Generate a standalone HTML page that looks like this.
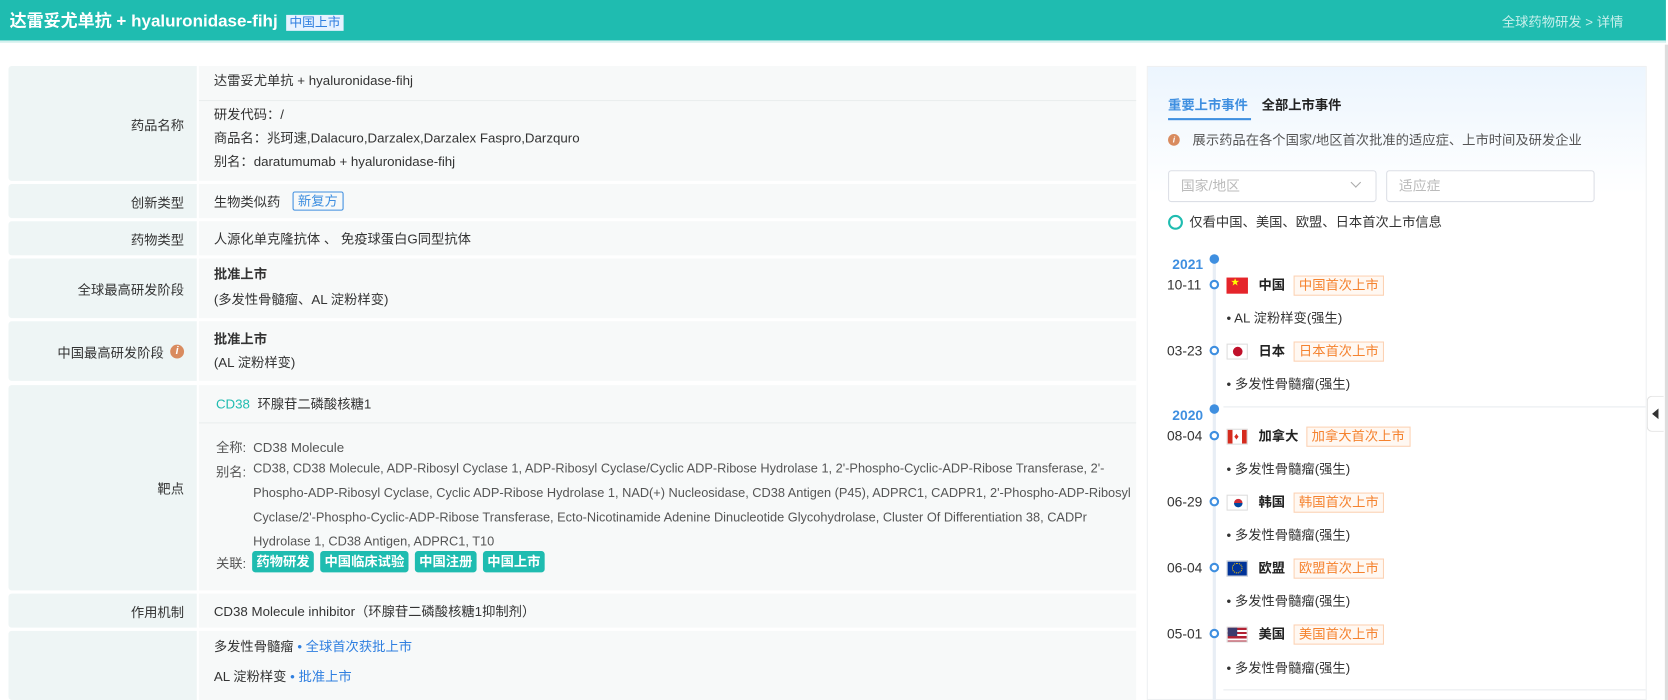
<!DOCTYPE html>
<html><head><meta charset="utf-8"><style>
*{margin:0;padding:0;box-sizing:border-box}
html,body{width:1668px;height:700px;overflow:hidden;background:#fff}
body{font-family:"Liberation Sans","Noto Sans CJK SC",sans-serif;font-size:12.5px;color:#333;position:relative}
#w{position:absolute;left:0;top:0;width:1568px;height:658px;overflow:hidden;transform:scale(1.0638);transform-origin:0 0}
.a{position:absolute;white-space:nowrap;line-height:16px}
.hd{position:absolute;left:0;top:0;width:1566px;height:40px;background:#1fbcb0;border-bottom:2px solid #d6f0ee}
.lab{position:absolute;left:8px;width:177px;background:#eef5f5;padding-right:12px;display:flex;align-items:center;justify-content:flex-end;font-size:12.5px;color:#333;border-radius:3px 0 0 3px}
.val{position:absolute;left:187px;width:881px;background:#f7f9f9}
.tag{display:inline-block;background:#1fbcb0;color:#fff;font-weight:bold;padding:1px 4px;border-radius:3px;margin-right:6px;font-size:12.5px;line-height:18px}
.ot{position:absolute;border:1px solid #fcd2b4;background:#fff8f2;color:#f5822e;font-size:12.5px;padding:0 4px;line-height:17px;white-space:nowrap}
.dot{position:absolute;left:1137px;width:9px;height:9px;border:2.5px solid #3f8fe0;border-radius:50%;background:#fff}
.dt{position:absolute;left:1097px;font-size:13px;color:#333;line-height:16px}
.fl{position:absolute;left:1153px;width:20px;height:15px;border:1px solid #ddd;overflow:hidden}
.cn{position:absolute;left:1183px;font-weight:bold;color:#222;font-size:12.5px;line-height:16px}
.li{position:absolute;left:1153px;font-size:12.5px;color:#333;line-height:16px}
</style></head><body><div id="w">
<div class="hd"></div>
<div class="a" style="left:9px;top:12px;display:flex;align-items:center;line-height:18px"><span style="color:#fff;font-size:16px;font-weight:bold">达雷妥尤单抗 + hyaluronidase-fihj</span><span style="margin-left:8px;background:#e6f2ff;color:#2f7fe0;font-size:12px;padding:0 3px;line-height:15px">中国上市</span></div>
<div class="a" style="left:1526px;top:13px;color:#c8f0ec;font-size:12.5px;transform:translateX(-100%)">全球药物研发 &gt; 详情</div>
<div class="a" style="left:1565px;top:42px;width:3px;height:616px;background:#ddd"></div>

<div class="lab" style="top:62px;height:108px">药品名称</div><div class="val" style="top:62px;height:108px"></div>
<div class="a" style="left:187px;top:94px;width:881px;height:1px;background:#eaeeee"></div>
<div class="a" style="left:201px;top:68px">达雷妥尤单抗 + hyaluronidase-fihj</div>
<div class="a" style="left:201px;top:100px">研发代码：/</div>
<div class="a" style="left:201px;top:122px">商品名：兆珂速,Dalacuro,Darzalex,Darzalex Faspro,Darzquro</div>
<div class="a" style="left:201px;top:144px">别名：daratumumab + hyaluronidase-fihj</div>

<div class="lab" style="top:173px;height:32px">创新类型</div><div class="val" style="top:173px;height:32px"></div>
<div class="a" style="left:201px;top:182px">生物类似药</div>
<div class="a" style="left:275px;top:180px;border:1px solid #3f8fe0;color:#3f8fe0;padding:0 4px;line-height:16px;border-radius:2px">新复方</div>

<div class="lab" style="top:208px;height:32px">药物类型</div><div class="val" style="top:208px;height:32px"></div>
<div class="a" style="left:201px;top:217px">人源化单克隆抗体 、 免疫球蛋白G同型抗体</div>

<div class="lab" style="top:243px;height:56px">全球最高研发阶段</div><div class="val" style="top:243px;height:56px"></div>
<div class="a" style="left:201px;top:250px;font-weight:bold">批准上市</div>
<div class="a" style="left:201px;top:274px">(多发性骨髓瘤、AL 淀粉样变)</div>

<div class="lab" style="top:302px;height:56px">中国最高研发阶段<span style="display:inline-block;width:13px;height:13px;border-radius:50%;background:#d98b5f;color:#fff;font-size:10px;font-style:italic;text-align:center;line-height:13px;margin-left:6px;font-weight:bold">i</span></div><div class="val" style="top:302px;height:56px"></div>
<div class="a" style="left:201px;top:311px;font-weight:bold">批准上市</div>
<div class="a" style="left:201px;top:333px">(AL 淀粉样变)</div>

<div class="lab" style="top:362px;height:193px">靶点</div><div class="val" style="top:362px;height:193px"></div>
<div class="a" style="left:187px;top:397px;width:881px;height:1px;background:#eaeeee"></div>
<div class="a" style="left:203px;top:372px;color:#1fbcb0">CD38</div>
<div class="a" style="left:242px;top:372px">环腺苷二磷酸核糖1</div>
<div class="a" style="left:203px;top:413px;color:#555">全称:</div>
<div class="a" style="left:238px;top:413px;color:#555">CD38 Molecule</div>
<div class="a" style="left:203px;top:436px;color:#555">别名:</div>
<div class="a" style="left:238px;top:429px;color:#555;line-height:23px;font-size:12px">CD38, CD38 Molecule, ADP-Ribosyl Cyclase 1, ADP-Ribosyl Cyclase/Cyclic ADP-Ribose Hydrolase 1, 2'-Phospho-Cyclic-ADP-Ribose Transferase, 2'-<br>Phospho-ADP-Ribosyl Cyclase, Cyclic ADP-Ribose Hydrolase 1, NAD(+) Nucleosidase, CD38 Antigen (P45), ADPRC1, CADPR1, 2'-Phospho-ADP-Ribosyl<br>Cyclase/2'-Phospho-Cyclic-ADP-Ribose Transferase, Ecto-Nicotinamide Adenine Dinucleotide Glycohydrolase, Cluster Of Differentiation 38, CADPr<br>Hydrolase 1, CD38 Antigen, ADPRC1, T10</div>
<div class="a" style="left:203px;top:522px;color:#555">关联:</div>
<div class="a" style="left:237px;top:518px;line-height:20px"><span class="tag">药物研发</span><span class="tag">中国临床试验</span><span class="tag">中国注册</span><span class="tag">中国上市</span></div>

<div class="lab" style="top:558px;height:32px">作用机制</div><div class="val" style="top:558px;height:32px"></div>
<div class="a" style="left:201px;top:567px">CD38 Molecule inhibitor（环腺苷二磷酸核糖1抑制剂）</div>

<div class="lab" style="top:593px;height:65px"></div><div class="val" style="top:593px;height:65px"></div>
<div class="a" style="left:201px;top:600px">多发性骨髓瘤 <span style="color:#2f7fe0">• 全球首次获批上市</span></div>
<div class="a" style="left:201px;top:628px">AL 淀粉样变 <span style="color:#2f7fe0">• 批准上市</span></div>

<div class="a" style="left:1078px;top:62px;width:470px;height:596px;background:linear-gradient(#ecf5fe,#fff 120px);border:1px solid #eef0f2"></div>
<div class="a" style="left:1098px;top:91px;color:#3f8fe0;font-weight:bold">重要上市事件</div>
<div class="a" style="left:1098px;top:111px;width:78px;height:2px;background:#3f8fe0"></div>
<div class="a" style="left:1186px;top:91px;color:#222;font-weight:bold">全部上市事件</div>
<div class="a" style="left:1098px;top:126px;width:11px;height:11px;border-radius:50%;background:#d98b5f;color:#fff;font-size:8px;text-align:center;line-height:11px;font-style:italic;font-weight:bold">i</div>
<div class="a" style="left:1121px;top:124px;color:#555">展示药品在各个国家/地区首次批准的适应症、上市时间及研发企业</div>
<div class="a" style="left:1098px;top:160px;width:196px;height:30px;border:1px solid #dcdfe6;border-radius:3px;background:#fff"></div>
<div class="a" style="left:1110px;top:167px;color:#bbb;font-size:13px">国家/地区</div>
<div class="a" style="left:1271px;top:168px;width:7px;height:7px;border-right:1px solid #aaa;border-bottom:1px solid #aaa;transform:rotate(45deg)"></div>
<div class="a" style="left:1303px;top:160px;width:196px;height:30px;border:1px solid #dcdfe6;border-radius:3px;background:#fff"></div>
<div class="a" style="left:1315px;top:167px;color:#bbb;font-size:13px">适应症</div>
<div class="a" style="left:1098px;top:202px;width:14px;height:14px;border:2.5px solid #1fbcb0;border-radius:50%"></div>
<div class="a" style="left:1118px;top:201px;color:#333">仅看中国、美国、欧盟、日本首次上市信息</div>

<div class="a" style="left:1140px;top:246px;width:3px;height:412px;background:#e8eef5"></div>
<div class="a" style="left:1137px;top:239px;width:9px;height:9px;border-radius:50%;background:#3f8fe0"></div>
<div class="a" style="left:1102px;top:241px;color:#3f8fe0;font-weight:bold;font-size:13px">2021</div>
<div class="dt" style="top:260px">10-11</div><div class="dot" style="top:263px"></div>
<div class="fl" style="top:261px;background:#e5252b;border-color:#e5252b"><span style="position:absolute;left:3px;top:0;color:#ff0;font-size:8px;line-height:8px">★</span></div>
<div class="cn" style="top:260px">中国</div><div class="ot" style="left:1216px;top:259px">中国首次上市</div>
<div class="li" style="top:291px">• AL 淀粉样变(强生)</div>
<div class="dt" style="top:322px">03-23</div><div class="dot" style="top:325px"></div>
<div class="fl" style="top:323px;background:#fff"><span style="position:absolute;left:5px;top:2px;width:9px;height:9px;border-radius:50%;background:#c0102a"></span></div>
<div class="cn" style="top:322px">日本</div><div class="ot" style="left:1216px;top:321px">日本首次上市</div>
<div class="li" style="top:353px">• 多发性骨髓瘤(强生)</div>
<div class="a" style="left:1150px;top:382px;width:397px;height:1px;background:#e8ecef"></div>
<div class="a" style="left:1137px;top:380px;width:9px;height:9px;border-radius:50%;background:#3f8fe0"></div>
<div class="a" style="left:1102px;top:383px;color:#3f8fe0;font-weight:bold;font-size:13px">2020</div>
<div class="dt" style="top:402px">08-04</div><div class="dot" style="top:405px"></div>
<div class="fl" style="top:403px;background:linear-gradient(90deg,#d52b1e 25%,#fff 25%,#fff 75%,#d52b1e 75%)"><span style="position:absolute;left:6px;top:2px;color:#d52b1e;font-size:9px;line-height:9px">♦</span></div>
<div class="cn" style="top:402px">加拿大</div><div class="ot" style="left:1228px;top:401px">加拿大首次上市</div>
<div class="li" style="top:433px">• 多发性骨髓瘤(强生)</div>
<div class="dt" style="top:464px">06-29</div><div class="dot" style="top:467px"></div>
<div class="fl" style="top:465px;background:#fff"><span style="position:absolute;left:6px;top:3px;width:8px;height:8px;border-radius:50%;background:linear-gradient(#cd2e3a 50%,#0047a0 50%)"></span></div>
<div class="cn" style="top:464px">韩国</div><div class="ot" style="left:1216px;top:463px">韩国首次上市</div>
<div class="li" style="top:495px">• 多发性骨髓瘤(强生)</div>
<div class="dt" style="top:526px">06-04</div><div class="dot" style="top:529px"></div>
<div class="fl" style="top:527px;background:#039"><span style="position:absolute;left:4px;top:1px;width:10px;height:10px;border-radius:50%;border:1px dotted #fc0"></span></div>
<div class="cn" style="top:526px">欧盟</div><div class="ot" style="left:1216px;top:525px">欧盟首次上市</div>
<div class="li" style="top:557px">• 多发性骨髓瘤(强生)</div>
<div class="dt" style="top:588px">05-01</div><div class="dot" style="top:591px"></div>
<div class="fl" style="top:589px;background:repeating-linear-gradient(#b22234 0 2px,#fff 2px 4px)"><span style="position:absolute;left:0;top:0;width:9px;height:8px;background:#3c3b6e"></span></div>
<div class="cn" style="top:588px">美国</div><div class="ot" style="left:1216px;top:587px">美国首次上市</div>
<div class="li" style="top:620px">• 多发性骨髓瘤(强生)</div>
<div class="a" style="left:1150px;top:648px;width:397px;height:1px;background:#e8ecef"></div>

<div class="a" style="left:1548px;top:372px;width:16px;height:34px;background:#fff;border:1px solid #e3e3e3;border-right:none;border-radius:5px 0 0 5px"></div>
<div class="a" style="left:1553px;top:384px;width:0;height:0;border-top:5px solid transparent;border-bottom:5px solid transparent;border-right:6px solid #333"></div>
</div></body></html>
